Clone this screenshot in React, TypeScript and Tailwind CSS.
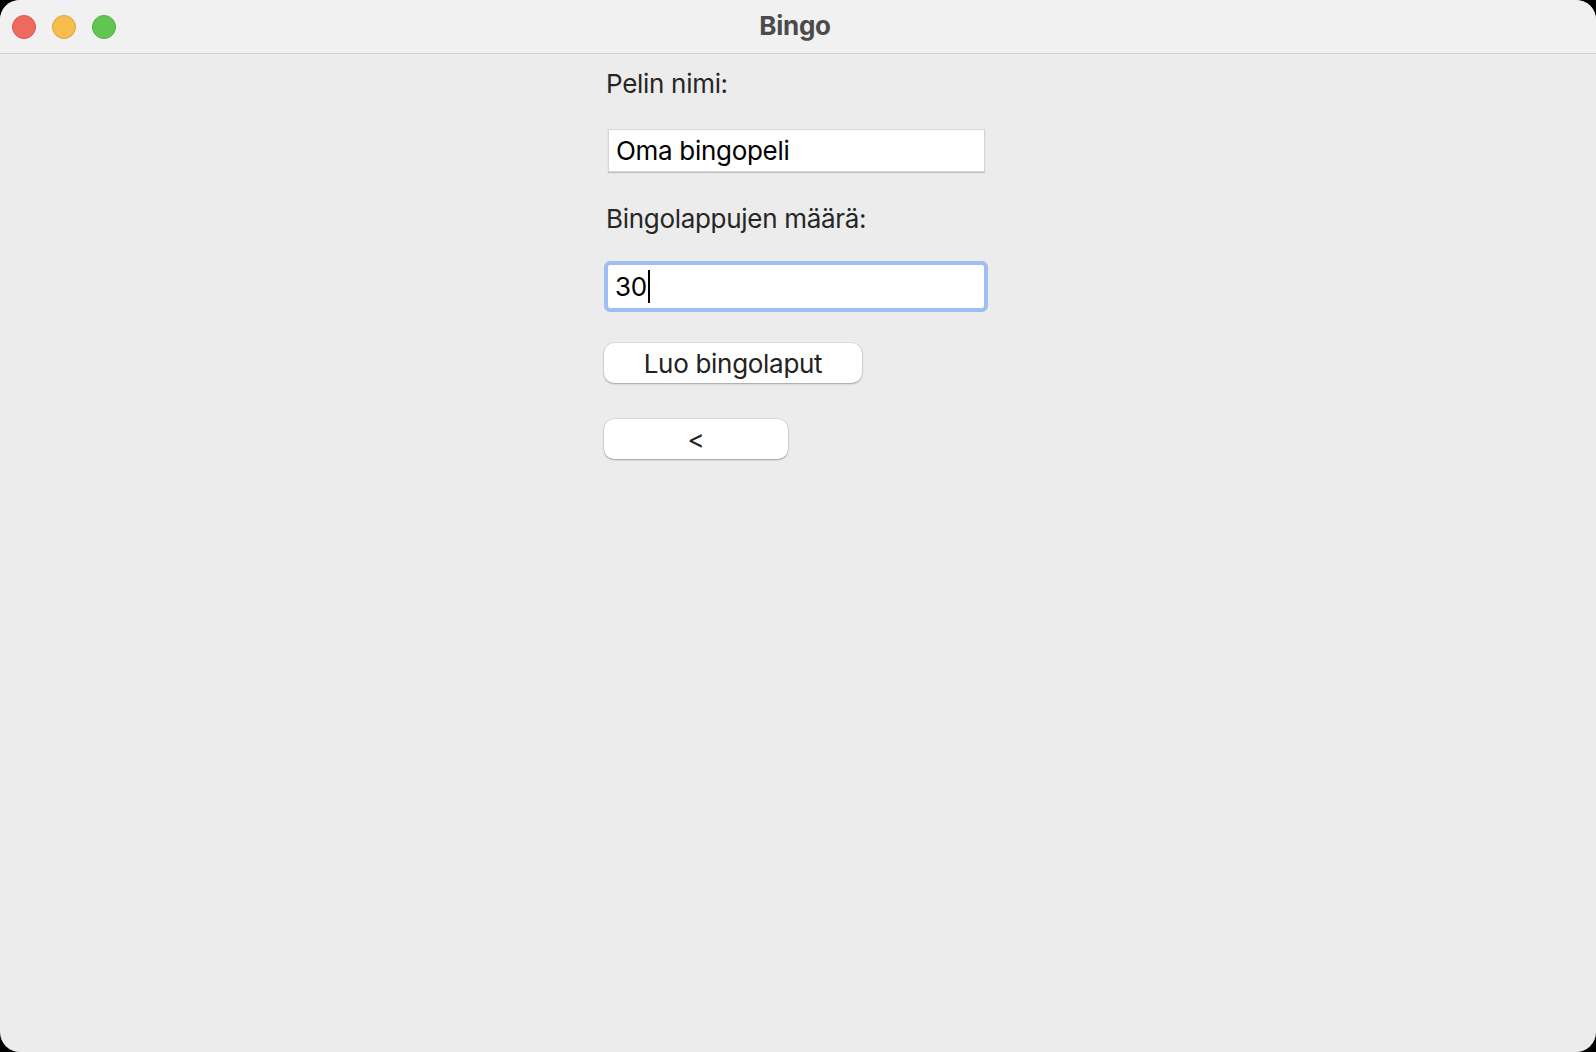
const font = { fontFamily: "Inter, 'Noto Sans', sans-serif" };

const TrafficLights = () => (
  <div className="flex items-center gap-4 pl-3">
    <span className="h-6 w-6 rounded-full border border-[#d8574c] bg-[#ee6a5f]" />
    <span className="h-6 w-6 rounded-full border border-[#d9a33f] bg-[#f6be4f]" />
    <span className="h-6 w-6 rounded-full border border-[#52ad47] bg-[#61c554]" />
  </div>
);

const App = () => {
  return (
    <div className="h-[1052px] w-full bg-black tracking-[-0.3px]" style={font}>
      <div className="flex h-full flex-col overflow-hidden rounded-[20px] bg-[#ececec]">
        <div className="grid h-[54px] shrink-0 grid-cols-[1fr_auto_1fr] items-center border-b border-[#d2d2d2] bg-[#f1f1f1]">
          <TrafficLights />
          <div className="-ml-[6px] -mt-[3px] text-[26px] font-bold text-[#4b4b4b]">Bingo</div>
          <div />
        </div>

        <div className="flex justify-center">
          <div className="flex w-[388px] flex-col items-start pt-[14px]">
            <label className="ml-[2px] text-[26px] leading-8 text-[#262626]">Pelin nimi:</label>

            <div className="ml-[4px] mt-[29px] flex h-[43px] w-[377px] items-center border border-[#d6d6d6] bg-white pl-[7px] text-[26px] text-black shadow-[0_1px_1px_rgba(0,0,0,0.18)]">
              Oma bingopeli
            </div>

            <label className="ml-[2px] mt-[31px] text-[26px] leading-8 text-[#262626]">
              Bingolappujen määrä:
            </label>

            <div className="ml-[4px] mt-[30px] flex h-[43px] w-[376px] items-center rounded-[2px] bg-white pl-[7px] text-[26px] text-black outline-[4px] outline-solid outline-[#9fbef2]">
              30
              <span className="ml-[1px] h-[33px] w-[2px] bg-black" />
            </div>

            <button className="mt-[35px] h-10 w-[258px] rounded-[10px] bg-white text-[26px] text-[#222] shadow-[0_0_0_0.5px_rgba(0,0,0,0.12),0_1px_2px_rgba(0,0,0,0.28)]">
              Luo bingolaput
            </button>

            <button className="mt-9 h-10 w-[184px] rounded-[10px] bg-white text-[26px] text-[#222] shadow-[0_0_0_0.5px_rgba(0,0,0,0.12),0_1px_2px_rgba(0,0,0,0.28)]">
              &lt;
            </button>
          </div>
        </div>
      </div>
    </div>
  );
};

export default App;
